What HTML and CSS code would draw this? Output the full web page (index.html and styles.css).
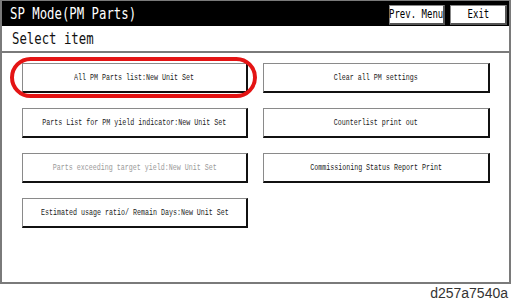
FILE: index.html
```html
<html>

<head>
  <title>SP Mode (PM Parts)</title>
  <link rel="stylesheet" href="styles.css">
</head>

<body>

  <div class="screen">
    <div class="titlebar">
      <span class="title">SP Mode(PM Parts)</span>
      <div class="nav">
        <button class="nav-btn prev"><span>Prev. Menu</span></button>
        <button class="nav-btn exit"><span>Exit</span></button>
      </div>
    </div>

    <div class="subhead">
      <span class="subhead-text">Select item</span>
    </div>

    <div class="items">
      <div class="cell">
        <button class="item"><span>All PM Parts list:New Unit Set</span></button>
        <div class="highlight"></div>
      </div>
      <div class="cell">
        <button class="item"><span>Clear all PM settings</span></button>
      </div>
      <div class="cell">
        <button class="item"><span>Parts List for PM yield indicator:New Unit Set</span></button>
      </div>
      <div class="cell">
        <button class="item"><span>Counterlist print out</span></button>
      </div>
      <div class="cell">
        <button class="item disabled"><span>Parts exceeding target yield:New Unit Set</span></button>
      </div>
      <div class="cell">
        <button class="item"><span>Commissioning Status Report Print</span></button>
      </div>
      <div class="cell">
        <button class="item"><span>Estimated usage ratio/ Remain Days:New Unit Set</span></button>
      </div>
    </div>
  </div>

  <div class="caption">d257a7540a</div>

</body>

</html>
```

FILE: styles.css
```css
:root {
  --frame: #7a7a7a;
  --ink: #111;
  --muted: #9a9a9a;
  --mark: #e41414;
}

* {
  margin: 0;
  padding: 0;
  box-sizing: border-box;
}

body {
  background: #fff;
  width: 512px;
  height: 306px;
  overflow: hidden;
  font-family: "DejaVu Sans Mono", monospace;
  color: var(--ink);
}

.screen {
  width: 511px;
  height: 284px;
  border: 2px solid var(--frame);
  border-top-width: 1px;
  display: flex;
  flex-direction: column;
}

.titlebar {
  height: 25px;
  background: #000;
  display: flex;
  align-items: center;
  justify-content: space-between;
  padding: 0 2px 0 8px;
}

.title {
  display: inline-block;
  color: #fff;
  font-size: 16px;
  transform: scaleX(0.77);
  transform-origin: left center;
  white-space: nowrap;
}

.nav {
  display: flex;
  gap: 5px;
  margin-top: 2px;
}

.nav-btn {
  height: 20px;
  background: #fff;
  border: 1px solid #888;
  border-right: 2px solid #555;
  border-bottom: 2px solid #555;
  font-family: "DejaVu Sans Mono", monospace;
  font-size: 12px;
  color: #000;
  display: flex;
  align-items: center;
  justify-content: center;
  overflow: visible;
}

.nav-btn span {
  display: inline-block;
  transform: scaleX(0.75);
  white-space: nowrap;
}

.prev {
  width: 56px;
}

.exit {
  width: 57px;
}

.subhead {
  height: 27px;
  border-bottom: 2px solid var(--frame);
  display: flex;
  align-items: center;
  padding-left: 10px;
}

.subhead-text {
  display: inline-block;
  font-size: 16px;
  transform: scaleX(0.77);
  transform-origin: left center;
  white-space: nowrap;
}

.items {
  display: grid;
  grid-template-columns: 226px 227px;
  grid-auto-rows: 30px;
  column-gap: 15px;
  row-gap: 15px;
  padding: 10px 0 0 20px;
}

.cell {
  position: relative;
}

.item {
  width: 100%;
  height: 100%;
  background: #fff;
  border-top: 1px solid #8a8a8a;
  border-left: 1px solid #8a8a8a;
  border-right: 2px solid var(--ink);
  border-bottom: 2px solid var(--ink);
  font-family: "Liberation Mono", monospace;
  font-size: 9px;
  color: #1a1a1a;
  display: flex;
  align-items: center;
  justify-content: center;
  overflow: visible;
}

.item span {
  display: inline-block;
  transform: scaleX(0.74);
  white-space: nowrap;
}

.item.disabled {
  color: var(--muted);
}

.highlight {
  position: absolute;
  left: -12px;
  top: -6px;
  width: 247px;
  height: 41px;
  border: 4px solid var(--mark);
  border-radius: 21px;
  pointer-events: none;
}

.caption {
  font-family: "Liberation Sans", Arial, sans-serif;
  font-size: 14px;
  line-height: 16px;
  color: #333;
  text-align: right;
  padding: 1px 4px 0 0;
}
```
